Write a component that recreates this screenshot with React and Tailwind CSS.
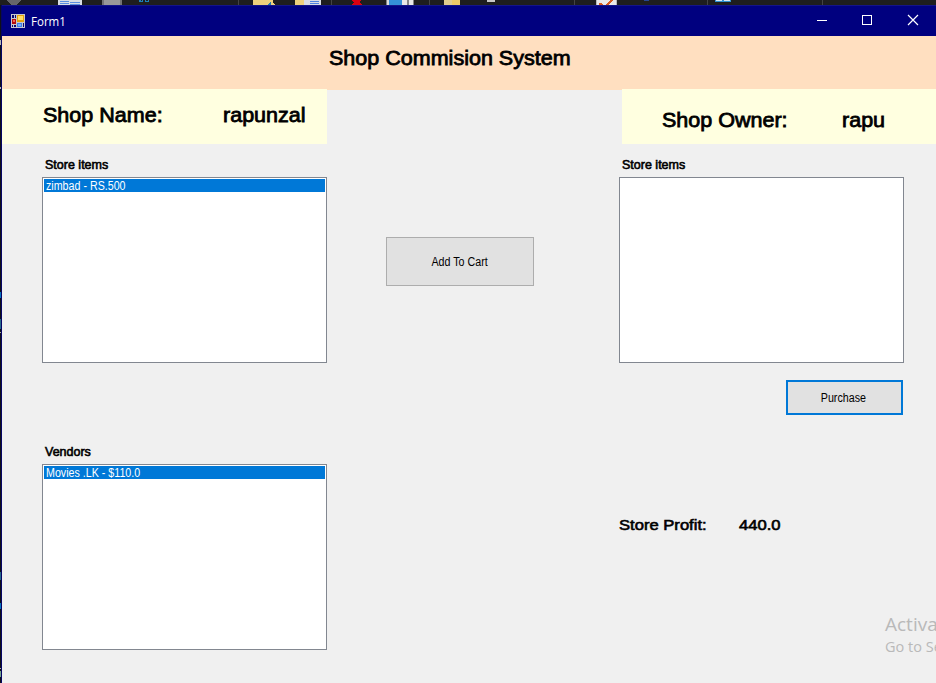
const heading =
  "block origin-left scale-x-[1.045] whitespace-pre text-[20.6px] leading-6 [-webkit-text-stroke:0.8px_black]";
const label =
  "whitespace-pre pl-[3px] text-[12.5px] leading-4 [-webkit-text-stroke:0.6px_black]";
const profit = "block origin-left scale-x-[1.13] whitespace-pre";

function ToolbarStrip() {
  return (
    <svg className="block h-[5px] w-full shrink-0" viewBox="0 0 936 5" shapeRendering="crispEdges">
      <rect width="936" height="5" fill="#1e1e1e" />
      <path d="M7 0h14v1l-5 4h-4l-5-4z" fill="#66666a" />
      <rect x="58" width="24" height="5" fill="#d9dde5" />
      <path d="M60 1.5h9M60 3.5h9M70 2.5h10M70 4.5h10" stroke="#5a8de0" />
      <rect x="102" width="20" height="5" fill="#747474" />
      <rect x="104" width="16" height="5" fill="#999" />
      <path d="M139 0h2v1h1v-1h1v2h-4zM145 0h1v1h2v-1h1v2h-4z" fill="#1b80b8" />
      <rect x="238" width="1" height="5" fill="#444" />
      <path d="M253 0h20v3l2 2h-22z" fill="#eed17c" />
      <path d="M271 1v4h-4z" fill="#2879a8" />
      <path d="M295 0h14v5h-14z" fill="#eed17c" />
      <rect x="304" width="17" height="5" fill="#d9dde5" />
      <path d="M310 1.5h9M310 3.5h9" stroke="#4f83df" />
      <rect x="331" width="1" height="5" fill="#444" />
      <path d="M351 0h10l-2 2l3 3h-11l3-3z" fill="#dc0010" />
      <rect x="386" width="28" height="5" fill="#858585" />
      <rect x="387" width="2" height="5" fill="#ddd" />
      <rect x="389" width="13" height="5" fill="#3490d8" />
      <rect x="402" width="5" height="5" fill="#e8e8e8" />
      <rect x="409" width="4" height="5" fill="#e8e8e8" />
      <rect x="429" width="1" height="5" fill="#444" />
      <rect x="444" width="8" height="5" fill="#e2cd8e" />
      <rect x="452" width="8" height="5" fill="#edca68" />
      <rect x="487" width="8" height="2" fill="#c8c8c8" />
      <rect x="574" width="1" height="5" fill="#444" />
      <rect x="596" width="21" height="5" fill="#b9b9b9" />
      <rect x="597" width="19" height="5" fill="#e9e9e9" />
      <path d="M599 3h2l2 2h-4zM610 0h3l-4 5h-3z" fill="#d65b20" />
      <rect x="644" width="5" height="1" fill="#274690" />
      <rect x="707" width="1" height="5" fill="#444" />
      <rect x="715" width="16" height="2" fill="#2f91d0" />
      <path d="M716 0h6v1h-6zM724 0h6v1h-6z" fill="#d7e8f2" />
      <rect x="822" width="1" height="5" fill="#444" />
    </svg>
  );
}

function EditorEdge() {
  return (
    <svg className="block h-[678px] w-[2px] shrink-0" viewBox="0 5 2 678" shapeRendering="crispEdges">
      <rect y="5" width="2" height="678" fill="#101018" />
      <rect x="1" y="5" width="1" height="678" fill="#050565" />
      <path d="M0 40h1v5h-1zM0 87h1v2h-1z" fill="#b8b8b8" />
      <path d="M0 292h1v6h-1zM0 603h1v6h-1z" fill="#0875c0" />
      <path d="M0 319h1v10h-1zM0 572h1v8h-1z" fill="#286b8b" />
      <path d="M0 332h1v1h-1zM0 668h1v1h-1z" fill="#aaa" />
      <rect y="671" width="1" height="6" fill="#75a58d" />
    </svg>
  );
}

function FormIcon() {
  return (
    <svg className="h-[14px] w-[14px]" viewBox="0 0 14 14" shapeRendering="crispEdges">
      <rect width="14" height="14" fill="#c6c6ce" />
      <path d="M1 1h2v3h-2zM4 1h1v3h-1zM1 11h1v2h-1zM3 11h2v2h-2zM12 9h1v4h-1z" fill="#080870" />
      <rect x="6" y="1" width="7" height="7" fill="#e3a10c" />
      <rect x="7" y="2" width="5" height="4" fill="#ffdc65" />
      <rect x="1" y="5" width="4" height="5" fill="#b40c0c" />
      <rect x="2" y="6" width="2" height="2" fill="#f06450" />
      <rect x="6" y="9" width="5" height="4" fill="#3d7ee8" />
      <rect x="7" y="10" width="3" height="2" fill="#79adff" />
    </svg>
  );
}

function TitleBar() {
  return (
    <header className="flex h-[31px] shrink-0 items-center border-t border-[#14148a] bg-[#00007f] pl-[9px] text-white">
      <FormIcon />
      <span className="ml-1.5 mt-px origin-left scale-x-[0.96] font-['Open_Sans',sans-serif] text-[12px] leading-4">Form1</span>
      <svg className="ml-auto h-[30px] w-[138px]" viewBox="0 0 138 30" fill="none" stroke="white">
        <path d="M19 14.5h10" />
        <rect x="64.5" y="9.5" width="9" height="9" />
        <path d="M110 9l10 10M120 9l-10 10" strokeWidth="1.2" />
      </svg>
    </header>
  );
}

function ListBox({ item }) {
  return (
    <div className="h-[186px] w-[285px] border border-[#828790] bg-white p-px">
      {item && (
        <div className="h-[13px] bg-[#0078d7] pl-[2px] text-[12px] leading-[14px] text-white">
          <span className="inline-block origin-left scale-x-[0.89] whitespace-pre">{item}</span>
        </div>
      )}
    </div>
  );
}

export default function App() {
  return (
    <div className="relative flex h-[683px] w-[936px] flex-col overflow-hidden bg-[#f0f0f0] font-['Liberation_Sans',Arial,sans-serif] text-black">
      <ToolbarStrip />
      <div className="flex min-h-0 flex-1">
        <EditorEdge />
        <div className="flex min-w-0 flex-1 flex-col">
          <TitleBar />
          <div className="flex h-[53px] shrink-0 bg-[#ffdfc0] pl-[327px] pt-[10px]">
            <h1 className={heading}>Shop Commision System</h1>
          </div>
          <div className="flex h-[55px] shrink-0 justify-between">
            <div className="flex w-[325px] bg-[#ffffe0] pl-[41px] pt-[14px]">
              <div className="w-[180px]"><div className="w-fit"><span className={heading}>Shop Name:</span></div></div>
              <span className={heading}>rapunzal</span>
            </div>
            <div className="h-px flex-1 bg-[#ffdfc0]" />
            <div className="flex w-[314px] bg-[#ffffe0] pl-10 pt-[19px]">
              <div className="w-[180px]"><div className="w-fit"><span className={heading}>Shop Owner:</span></div></div>
              <span className={heading}>rapu</span>
            </div>
          </div>
          <main className="flex pl-10 pt-[13px]">
            <section className="w-[285px]">
              <div className="h-5"><p className={label}>Store items</p></div>
              <ListBox item="zimbad - RS.500" />
              <div className="mt-[81px] h-5"><p className={label}>Vendors</p></div>
              <ListBox item="Movies .LK - $110.0" />
            </section>
            <section className="ml-[59px] mt-20 w-[148px]">
              <button className="flex h-[49px] w-[148px] items-center justify-center border border-[#adadad] bg-[#e1e1e1] pr-px text-[12px]">
                <span className="scale-x-[0.89] whitespace-pre">Add To Cart</span>
              </button>
            </section>
            <section className="ml-[85px] w-[285px]">
              <div className="h-5"><p className={label}>Store items</p></div>
              <ListBox />
              <button className="ml-[167px] mt-[17px] flex h-[35px] w-[117px] items-center justify-center border-2 border-[#0078d7] bg-[#e1e1e1] pr-[2px] text-[12px]">
                <span className="scale-x-[0.89]">Purchase</span>
              </button>
              <div className="mt-[100px] flex text-[14.7px] leading-5 [-webkit-text-stroke:0.6px_black]">
                <div className="w-[120px]"><span className={profit}>Store Profit:</span></div>
                <span className={profit}>440.0</span>
              </div>
            </section>
          </main>
        </div>
      </div>
      <div className="absolute left-[885px] top-[612px] whitespace-nowrap font-['Open_Sans',sans-serif] text-[#b9b9b9]">
        <p className="text-[19px] leading-6">Activa</p>
        <p className="text-[14.5px] leading-[22px]">Go to Se</p>
      </div>
    </div>
  );
}
